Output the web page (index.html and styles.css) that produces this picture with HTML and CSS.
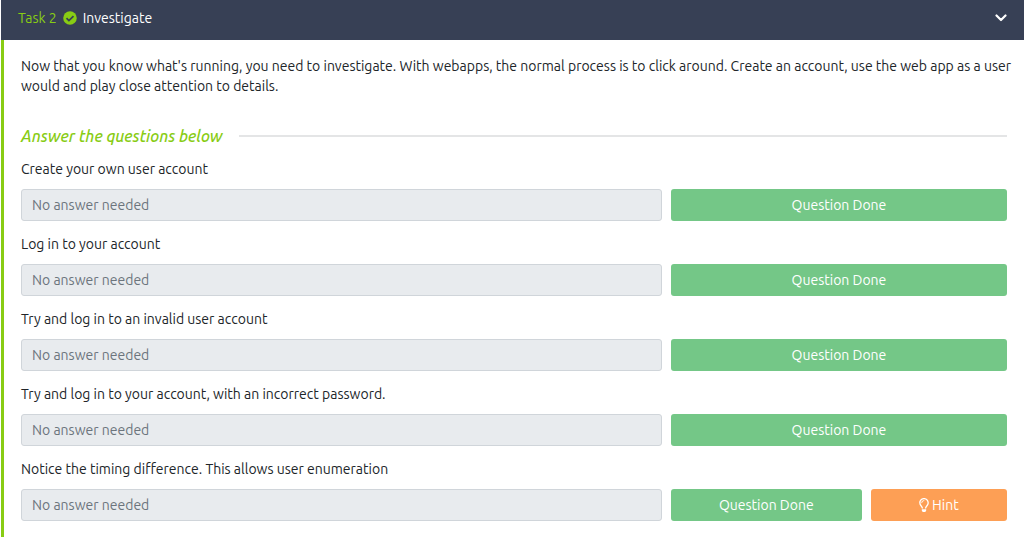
FILE: index.html
```html
<!DOCTYPE html>
<html lang="en">
<head>
    <meta charset="UTF-8">
    <meta name="viewport" content="width=device-width, initial-scale=1.0">
    <title>Task 2 - Investigate</title>
    <link rel="stylesheet" href="styles.css">
</head>
<body>
    <div class="task">
        <header class="task-header">
            <span class="task-number">Task 2</span>
            <svg class="check-icon" viewBox="0 0 512 512" aria-hidden="true">
                <circle cx="256" cy="256" r="248" fill="#88cc14"/>
                <path d="M128 264l88 88 168-168" fill="none" stroke="#374055" stroke-width="62"/>
            </svg>
            <span class="task-title">Investigate</span>
            <button class="toggle" type="button" aria-label="Collapse task">
                <svg viewBox="0 0 12 8" aria-hidden="true">
                    <path d="M1.5 1.5L6 6l4.500-4.500" fill="none" stroke="#fff" stroke-width="2.200" stroke-linecap="round" stroke-linejoin="round"/>
                </svg>
            </button>
        </header>

        <main class="task-body">
            <p class="description">Now that you know what's running, you need to investigate. With webapps, the normal process is to click around. Create an account, use the web app as a user would and play close attention to details.</p>

            <h2 class="questions-title">Answer the questions below</h2>

            <div class="question">
                <label for="answer-1">Create your own user account</label>
                <div class="answer-row">
                    <input type="text" id="answer-1" placeholder="No answer needed" disabled>
                    <div class="actions">
                        <button class="btn btn-done" type="button">Question Done</button>
                    </div>
                </div>
            </div>

            <div class="question">
                <label for="answer-2">Log in to your account</label>
                <div class="answer-row">
                    <input type="text" id="answer-2" placeholder="No answer needed" disabled>
                    <div class="actions">
                        <button class="btn btn-done" type="button">Question Done</button>
                    </div>
                </div>
            </div>

            <div class="question">
                <label for="answer-3">Try and log in to an invalid user account</label>
                <div class="answer-row">
                    <input type="text" id="answer-3" placeholder="No answer needed" disabled>
                    <div class="actions">
                        <button class="btn btn-done" type="button">Question Done</button>
                    </div>
                </div>
            </div>

            <div class="question">
                <label for="answer-4">Try and log in to your account, with an incorrect password.</label>
                <div class="answer-row">
                    <input type="text" id="answer-4" placeholder="No answer needed" disabled>
                    <div class="actions">
                        <button class="btn btn-done" type="button">Question Done</button>
                    </div>
                </div>
            </div>

            <div class="question">
                <label for="answer-5">Notice the timing difference. This allows user enumeration</label>
                <div class="answer-row">
                    <input type="text" id="answer-5" placeholder="No answer needed" disabled>
                    <div class="actions with-hint">
                        <button class="btn btn-done" type="button">Question Done</button>
                        <button class="btn btn-hint" type="button">
                            <svg viewBox="0 0 352 512" aria-hidden="true">
                                <path d="M176 80c-52.940 0-96 43.060-96 96 0 8.840 7.160 16 16 16s16-7.160 16-16c0-35.300 28.720-64 64-64 8.840 0 16-7.160 16-16s-7.160-16-16-16zM96.060 459.170c0 3.150.93 6.220 2.680 8.840l24.510 36.840c2.970 4.460 7.970 7.140 13.320 7.140h78.850c5.360 0 10.360-2.680 13.320-7.140l24.510-36.840c1.740-2.620 2.670-5.700 2.680-8.840l.05-43.180H96.020l.04 43.180zM176 0C73.720 0 0 82.970 0 176c0 44.370 16.450 84.850 43.560 115.780 16.640 18.990 42.740 58.800 52.420 92.160v.06h48v-.12c-.01-4.770-.72-9.510-2.150-14.070-5.590-17.810-22.820-64.770-62.170-109.670-20.540-23.430-31.520-53.150-31.610-84.140-.2-73.640 59.670-128 127.950-128 70.580 0 128 57.420 128 128 0 30.970-11.240 60.850-31.650 84.140-39.110 44.610-56.420 91.470-62.100 109.460a47.507 47.507 0 0 0-2.220 14.300v.1h48v-.05c9.680-33.370 35.780-73.180 52.420-92.160C335.550 260.850 352 220.370 352 176 352 78.800 273.200 0 176 0z" fill="currentColor"/>
                            </svg>
                            Hint
                        </button>
                    </div>
                </div>
            </div>
        </main>
    </div>
</body>
</html>
```

FILE: styles.css
```css
* {
    box-sizing: border-box;
}

body {
    margin: 0;
    background-color: #fff;
    color: #212529;
    font-family: Ubuntu, "Noto Sans", sans-serif;
    font-size: 14px;
    line-height: 20px;
}

.task {
    min-height: 100vh;
    padding-left: 1px;
    display: flex;
    flex-direction: column;
}

.task-header {
    display: flex;
    align-items: center;
    gap: 6px;
    height: 40px;
    padding: 0 17px 4px;
    background-color: #374055;
    color: #fff;
}

.task-number {
    color: #88cc14;
}

.check-icon {
    width: 14px;
    height: 14px;
}

.toggle {
    margin-left: auto;
    padding: 0;
    border: none;
    background: none;
    cursor: pointer;
}

.toggle svg {
    display: block;
    width: 12px;
    height: 8px;
}

.task-body {
    flex: 1;
    padding: 16px 17px 0;
    border-left: 3px solid #88cc14;
}

.description {
    margin: 0 -8px 28px 0;
}

.questions-title {
    display: flex;
    align-items: center;
    gap: 16px;
    margin: 0 0 11px;
    color: #88cc14;
    font-size: 16px;
    font-style: italic;
    font-weight: 500;
    line-height: 24px;
}

.questions-title::after {
    content: "";
    flex: 1;
    height: 2px;
    background-color: #e4e5e6;
}

.question {
    margin-bottom: 13px;
}

.question label {
    display: block;
    margin-bottom: 10px;
}

.answer-row {
    display: grid;
    grid-template-columns: 65% 1fr;
    gap: 9px;
}

.answer-row input {
    width: 100%;
    height: 32px;
    padding: 0 10px;
    border: 1px solid #d0d5da;
    border-radius: 3px;
    background-color: #e8ebee;
    font: inherit;
}

.answer-row input::placeholder {
    color: #6c757d;
    opacity: 1;
}

.actions {
    display: grid;
    gap: 9px;
}

.actions.with-hint {
    grid-template-columns: 7fr 5fr;
}

.btn {
    display: flex;
    align-items: center;
    justify-content: center;
    gap: 3px;
    height: 32px;
    padding: 0 10px;
    border: none;
    border-radius: 3px;
    color: #fff;
    font: inherit;
    cursor: pointer;
}

.btn svg {
    width: 10px;
    height: 14px;
}

.btn-done {
    background-color: #74c787;
}

.btn-hint {
    background-color: #fd9f55;
}
```
